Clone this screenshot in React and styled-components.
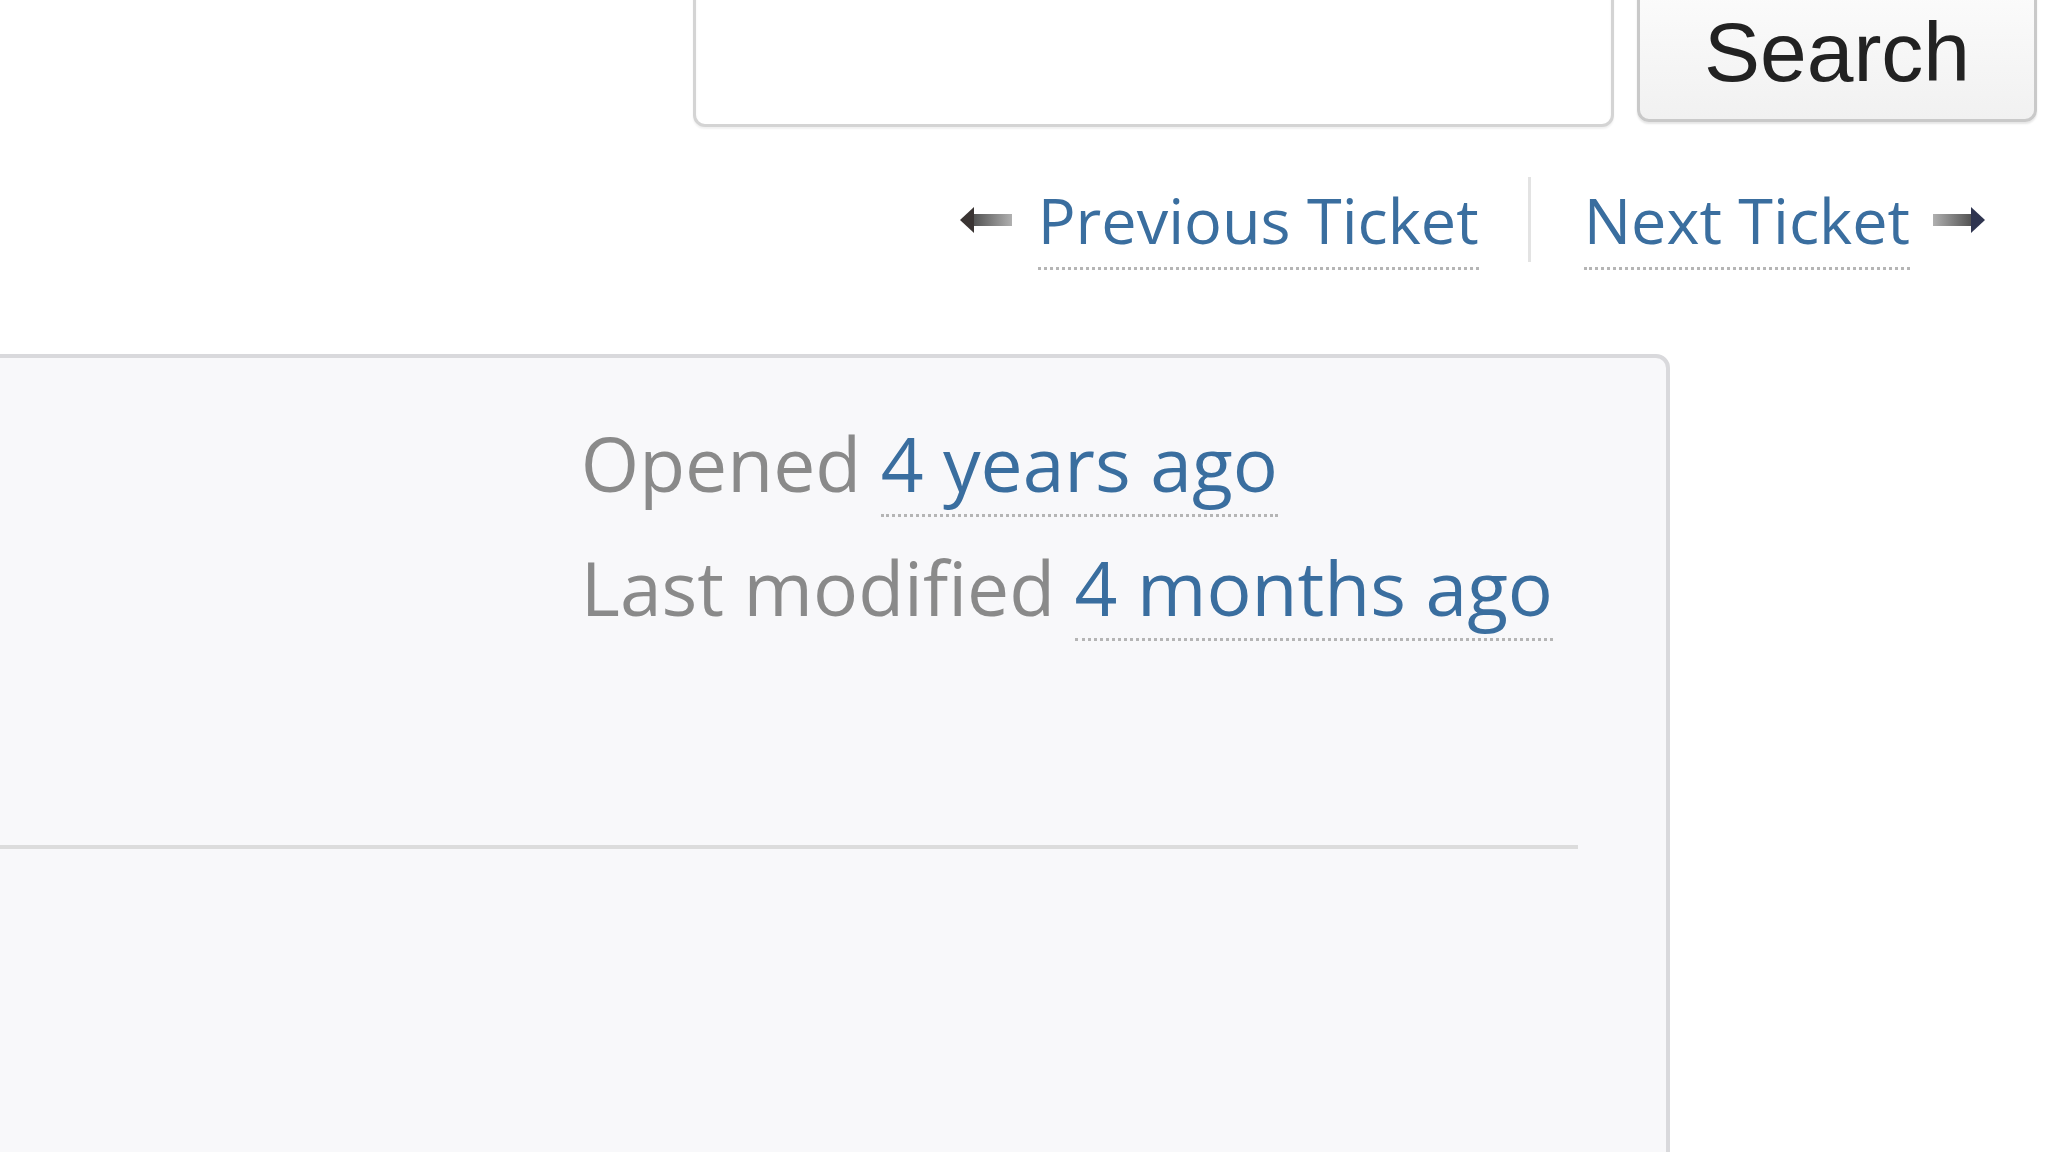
import React from "react";
import styled, { createGlobalStyle } from "styled-components";

const Global = createGlobalStyle`
  html, body { margin: 0; padding: 0; background: #ffffff; overflow: hidden; }
  body { font-family: "Open Sans", "Liberation Sans", sans-serif; }
`;

const Page = styled.div`
  width: 2048px;
  height: 1152px;
  overflow: hidden;
  display: flex;
  flex-direction: column;
`;

const SearchBar = styled.form`
  display: flex;
  justify-content: flex-end;
  align-items: flex-start;
  gap: 23px;
  margin-top: -60px;
  padding-right: 11px;
`;

const SearchInput = styled.input`
  width: 921px;
  height: 187px;
  box-sizing: border-box;
  border: 3px solid #d4d4d4;
  border-radius: 12px;
  background: #fff;
  box-shadow: inset 0 2px 3px rgba(0,0,0,0.05), 0 2px 2px rgba(0,0,0,0.06);
  outline: none;
`;

const SearchButton = styled.button`
  width: 400px;
  height: 182px;
  box-sizing: border-box;
  border: 3px solid #c9c9c9;
  border-radius: 12px;
  background: linear-gradient(#ffffff, #f1f1f1);
  box-shadow: 0 2px 2px rgba(0,0,0,0.1);
  font-family: "Liberation Sans", Arial, sans-serif;
  font-size: 84px;
  line-height: 84px;
  color: #222;
  display: flex;
  align-items: flex-end;
  justify-content: center;
  padding: 0 0 25px 0;
`;

const Nav = styled.nav`
  display: flex;
  justify-content: flex-end;
  align-items: center;
  height: 85px;
  margin-top: 50px;
  padding-right: 63px;
`;

const NavItem = styled.span`
  display: flex;
  align-items: center;
  gap: ${p => p.$gap}px;
`;

const NavLink = styled.a`
  font-size: 63px;
  line-height: 72px;
  letter-spacing: 0;
  color: #3a6e9f;
  text-decoration: none;
  padding-bottom: 11px;
  border-bottom: 3px dotted #b5b5b5;
  position: relative;
  top: 7px;
`;

const Sep = styled.span`
  width: 3px;
  height: 85px;
  background: #e3e3e3;
  margin: 0 53px 0 49px;
`;

const Card = styled.div`
  margin-top: 92px;
  margin-left: -20px;
  width: 1690px;
  height: 1000px;
  flex: none;
  box-sizing: border-box;
  background: #f8f8fa;
  border: 4px solid #d9d9dc;
  border-radius: 0 14px 0 0;
  padding: 43px 88px 0 0;
  display: flex;
  flex-direction: column;
`;

const DateRow = styled.div`
  display: flex;
  justify-content: flex-end;
  padding-right: 25px;
`;

const DateBlock = styled.div`
  font-size: 75px;
  line-height: 124px;
  letter-spacing: 0;
  color: #8a8a8a;
`;

const Line = styled.div`
  white-space: nowrap;
`;

const TimeLink = styled.a`
  color: #3a6e9f;
  text-decoration: none;
  border-bottom: 3px dotted #b5b5b5;
`;

const Rule = styled.hr`
  margin: 196px 0 0 0;
  border: none;
  height: 4px;
  background: #dcdcdc;
`;

const Arrow = ({ dir }) => {
  const left = dir === "left";
  const id = `g-${dir}`;
  return (
    <svg width="52" height="28" viewBox="0 0 52 28">
      <defs>
        <linearGradient id={id} x1={left ? "0" : "1"} y1="0" x2={left ? "1" : "0"} y2="0">
          <stop offset="0" stopColor="#4a4a4a" />
          <stop offset="1" stopColor="#b0b0b0" />
        </linearGradient>
      </defs>
      {left ? (
        <>
          <rect x="10" y="8" width="42" height="12" fill={`url(#${id})`} />
          <polygon points="0,14 14,1 14,27" fill="#3a3433" />
        </>
      ) : (
        <>
          <rect x="0" y="8" width="42" height="12" fill={`url(#${id})`} />
          <polygon points="52,14 38,1 38,27" fill="#2f3550" />
        </>
      )}
    </svg>
  );
};

export default function App() {
  return (
    <Page>
      <Global />
      <SearchBar onSubmit={e => e.preventDefault()}>
        <SearchInput type="text" />
        <SearchButton type="submit">Search</SearchButton>
      </SearchBar>
      <Nav>
        <NavItem $gap={26}>
          <Arrow dir="left" />
          <NavLink href="#">Previous Ticket</NavLink>
        </NavItem>
        <Sep />
        <NavItem $gap={23}>
          <NavLink href="#">Next Ticket</NavLink>
          <Arrow dir="right" />
        </NavItem>
      </Nav>
      <Card>
        <DateRow>
          <DateBlock>
            <Line>Opened <TimeLink href="#">4 years ago</TimeLink></Line>
            <Line>Last modified <TimeLink href="#">4 months ago</TimeLink></Line>
          </DateBlock>
        </DateRow>
        <Rule />
      </Card>
    </Page>
  );
}
